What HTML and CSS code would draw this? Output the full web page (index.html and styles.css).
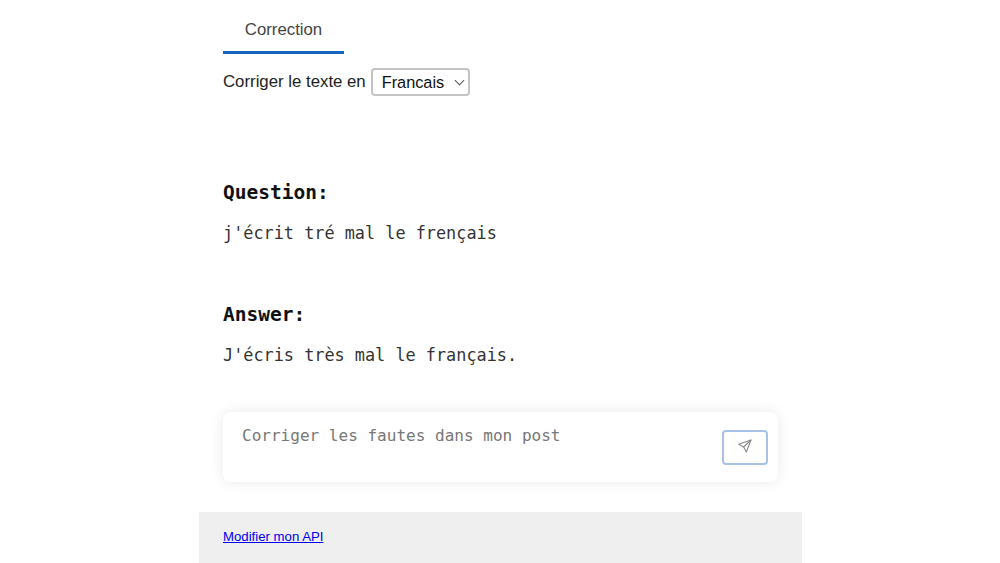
FILE: index.html
```html
<!DOCTYPE html>
<html lang="fr">

<head>
    <meta charset="UTF-8">
    <meta name="viewport" content="width=device-width, initial-scale=1.0">
    <title>Correction</title>
    <link rel="stylesheet" href="styles.css">
</head>

<body>
    <div class="singlePage">
        <main class="content">
            <nav class="tabs">
                <div class="tab active">Correction</div>
            </nav>

            <div class="lang_row">
                <label for="lang">Corriger le texte en</label>
                <div class="select_wrap">
                    <select id="lang" class="lang_select">
                        <option>Francais</option>
                    </select>
                </div>
            </div>

            <section class="chat">
                <h2>Question:</h2>
                <p>j'écrit tré mal le frençais</p>
                <h2 class="answer_title">Answer:</h2>
                <p>J'écris très mal le français.</p>
            </section>

            <form class="prompt">
                <textarea class="prompt_input" rows="2" placeholder="Corriger les fautes dans mon post"></textarea>
                <button type="button" class="send_btn" aria-label="Envoyer">
                    <svg viewBox="0 0 24 24" width="16" height="16" fill="none" stroke="#888" stroke-width="1.6" stroke-linejoin="round" stroke-linecap="round">
                        <path d="M21 3 2.5 9.5l7.5 4 4 7.5z" />
                        <path d="M21 3 10 13.5" />
                    </svg>
                </button>
            </form>
        </main>

        <footer class="footer">
            <a href="#">Modifier mon API</a>
        </footer>
    </div>
</body>

</html>
```

FILE: styles.css
```css
* {
    box-sizing: border-box;
    margin: 0;
    padding: 0;
}

body {
    height: 563px;
    overflow: hidden;
    background-color: white;
    font-family: 'Liberation Sans', Arial, sans-serif;
    color: #222;
}

.singlePage {
    width: 603px;
    height: 563px;
    margin-left: 199px;
    display: flex;
    flex-direction: column;
}

.content {
    flex: 1;
    padding: 0 24px;
    display: flex;
    flex-direction: column;
}

.tabs {
    display: flex;
}

.tab {
    width: 121px;
    height: 54px;
    padding-top: 21px;
    text-align: center;
    font-size: 16.8px;
    line-height: 18px;
    color: #444;
    border-bottom: 3px solid #1565c0;
}

.lang_row {
    margin-top: 14px;
    display: flex;
    align-items: center;
    gap: 5px;
    font-size: 16.8px;
}

.select_wrap {
    position: relative;
}

/* petit chevron, plus fin que celui du navigateur */
.select_wrap::after {
    content: '';
    position: absolute;
    top: 9px;
    right: 7px;
    width: 6px;
    height: 6px;
    border-right: 1px solid #555;
    border-bottom: 1px solid #555;
    transform: rotate(45deg);
    pointer-events: none;
}

.lang_select {
    display: block;
    width: 99px;
    height: 28px;
    padding-left: 9px;
    appearance: none;
    font-family: 'Liberation Sans', Arial, sans-serif;
    font-size: 16.3px;
    color: #111;
    background-color: white;
    border: 2px solid #c4c4c4;
    border-radius: 4px;
}

.chat {
    margin-top: 85px;
    font-family: 'DejaVu Sans Mono', monospace;
    color: #333;
}

.chat h2 {
    font-size: 19.5px;
    line-height: 24px;
    font-weight: bold;
    color: #111;
}

.chat p {
    margin-top: 16px;
    font-size: 16.85px;
    line-height: 24px;
}

.chat .answer_title {
    margin-top: 58px;
}

.prompt {
    margin-top: 45px;
    width: 555px;
    height: 70px;
    display: flex;
    justify-content: space-between;
    align-items: flex-start;
    padding: 14px 10px 0 19px;
    background-color: white;
    border-radius: 8px;
    box-shadow: 0 0 14px rgba(0, 0, 0, 0.09);
}

.prompt_input {
    flex: 1;
    height: 40px;
    border: none;
    outline: none;
    resize: none;
    font-family: 'DejaVu Sans Mono', monospace;
    font-size: 16.05px;
    line-height: 20px;
}

.prompt_input::placeholder {
    color: #777;
}

.send_btn {
    margin-top: 4px;
    width: 46px;
    height: 35px;
    padding-bottom: 3px;
    display: flex;
    justify-content: center;
    align-items: center;
    background-color: white;
    border: 2px solid #a9c1e8;
    border-radius: 4px;
}

.footer {
    height: 51px;
    padding: 0 24px 2px;
    display: flex;
    align-items: center;
    background-color: #efefef;
    font-size: 13.2px;
}

.footer a {
    color: #0000ee;
}
```
